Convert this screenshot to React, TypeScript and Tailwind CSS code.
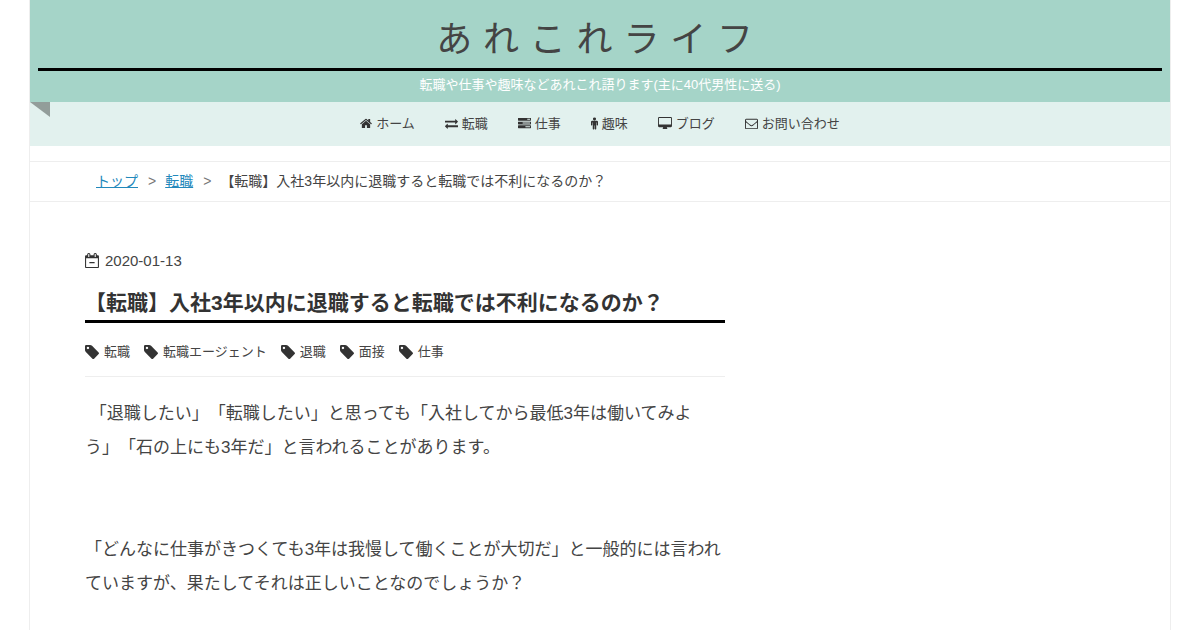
import clsx from 'clsx';

// [viewBox, path] of each glyph, on a 1792 unit em
const glyphs = {
  home: [
    '64 0 1664 1792',
    'M1472 992v480q0 26-19 45t-45 19h-384v-384h-256v384h-384q-26 0-45-19t-19-45v-480q0-1 .5-3t.5-3l575-474 575 474q1 2 1 6zm223-69l-62 74q-8 9-21 11h-3q-13 0-21-7l-692-577-692 577q-12 8-24 7-13-2-21-11l-62-74q-8-10-7-23.5t11-21.5l719-599q32-26 76-26t76 26l244 204v-195q0-14 9-23t23-9h192q14 0 23 9t9 23v408l219 182q10 8 11 21.5t-7 23.5z',
  ],
  exchange: [
    '0 0 1792 1792',
    'M1792 1184v192q0 13-9.5 22.5t-22.5 9.5h-1376v192q0 13-9.5 22.5t-22.5 9.5q-12 0-24-10l-319-320q-9-9-9-22 0-14 9-23l320-320q9-9 23-9 13 0 22.5 9.5t9.5 22.5v192h1376q13 0 22.5 9.5t9.5 22.5zm0-544q0 14-9 23l-320 320q-9 9-23 9-13 0-22.5-9.5t-9.5-22.5v-192h-1376q-13 0-22.5-9.5t-9.5-22.5v-192q0-13 9.5-22.5t22.5-9.5h1376v-192q0-14 9-23t23-9q12 0 24 10l319 319q9 9 9 23z',
  ],
  tasks: [
    '0 0 1792 1792',
    'M1024 1408h640v-128h-640v128zm-384-512h1024v-128h-1024v128zm640-512h384v-128h-384v128zm512 832v256q0 26-19 45t-45 19h-1664q-26 0-45-19t-19-45v-256q0-26 19-45t45-19h1664q26 0 45 19t19 45zm0-512v256q0 26-19 45t-45 19h-1664q-26 0-45-19t-19-45v-256q0-26 19-45t45-19h1664q26 0 45 19t19 45zm0-512v256q0 26-19 45t-45 19h-1664q-26 0-45-19t-19-45v-256q0-26 19-45t45-19h1664q26 0 45 19t19 45z',
  ],
  male: [
    '384 0 1024 1792',
    'M1408 672v416q0 40-28 68t-68 28-68-28-28-68v-352h-64v912q0 46-33 79t-79 33-79-33-33-79v-464h-64v464q0 46-33 79t-79 33-79-33-33-79v-912h-64v352q0 40-28 68t-68 28-68-28-28-68v-416q0-80 56-136t136-56h640q80 0 136 56t56 136zm-288-448q0 93-65.5 158.5t-158.5 65.5-158.5-65.5-65.5-158.5 65.5-158.5 158.5-65.5 158.5 65.5 65.5 158.5z',
  ],
  desktop: [
    '-64 0 1920 1792',
    'M1728 992v-832q0-13-9.5-22.5t-22.5-9.5h-1600q-13 0-22.5 9.5t-9.5 22.5v832q0 13 9.5 22.5t22.5 9.5h1600q13 0 22.5-9.5t9.5-22.5zm128-832v1088q0 66-47 113t-113 47h-544q0 37 16 77.5t32 71 16 43.5q0 26-19 45t-45 19h-512q-26 0-45-19t-19-45q0-14 16-44t32-70 16-78h-544q-66 0-113-47t-47-113v-1088q0-66 47-113t113-47h1600q66 0 113 47t47 113z',
  ],
  envelope: [
    '0 0 1792 1792',
    'M1664 1504v-768q-32 36-69 66-268 206-426 338-51 43-83 67t-86.5 48.5-102.5 24.5h-2q-48 0-102.5-24.5t-86.5-48.5-83-67q-158-132-426-338-37-30-69-66v768q0 13 9.5 22.5t22.5 9.5h1472q13 0 22.5-9.5t9.5-22.5zm0-1051v-24.5l-.5-13-3-12.5-5.5-9-9-7.5-14-2.5h-1472q-13 0-22.5 9.5t-9.5 22.5q0 168 147 284 193 152 401 317 6 5 35 29.5t46 37.5 44.5 31.5 50.5 27.5 43 9h2q20 0 43-9t50.5-27.5 44.5-31.5 46-37.5 35-29.5q208-165 401-317 54-43 100.5-115.5t46.5-131.5zm128-37v1088q0 66-47 113t-113 47h-1472q-66 0-113-47t-47-113v-1088q0-66 47-113t113-47h1472q66 0 113 47t47 113z',
  ],
  calendar: [
    '64 0 1664 1792',
    'M192 1664h1408v-1024h-1408v1024zm384-1216v-288q0-14-9-23t-23-9h-64q-14 0-23 9t-9 23v288q0 14 9 23t23 9h64q14 0 23-9t9-23zm768 0v-288q0-14-9-23t-23-9h-64q-14 0-23 9t-9 23v288q0 14 9 23t23 9h64q14 0 23-9t9-23zm384-64v1280q0 52-38 90t-90 38h-1408q-52 0-90-38t-38-90v-1280q0-52 38-90t90-38h128v-96q0-66 47-113t113-47h64q66 0 113 47t47 113v96h384v-96q0-66 47-113t113-47h64q66 0 113 47t47 113v96h128q52 0 90 38t38 90zM608 1088h576q32 0 32 32v64q0 32-32 32h-576q-32 0-32-32v-64q0-32 32-32z',
  ],
  tag: [
    '128 128 1516 1516',
    'M576 448q0-53-37.5-90.5t-90.5-37.5-90.5 37.5-37.5 90.5 37.5 90.5 90.5 37.5 90.5-37.5 37.5-90.5zm1067 576q0 53-37 90l-491 492q-39 37-91 37-53 0-90-37l-715-716q-38-37-64.5-101t-26.5-117v-416q0-52 38-90t90-38h416q53 0 117 26.5t102 64.5l715 714q37 39 37 91z',
  ],
};

type GlyphName = keyof typeof glyphs;

const navItems: { label: string; icon: GlyphName; width: string }[] = [
  { label: 'ホーム', icon: 'home', width: 'w-[12px]' },
  { label: '転職', icon: 'exchange', width: 'w-[13px]' },
  { label: '仕事', icon: 'tasks', width: 'w-[13px]' },
  { label: '趣味', icon: 'male', width: 'w-[7px]' },
  { label: 'ブログ', icon: 'desktop', width: 'w-[14px]' },
  { label: 'お問い合わせ', icon: 'envelope', width: 'w-[13px]' },
];

const tags = ['転職', '転職エージェント', '退職', '面接', '仕事'];

const title = '【転職】入社3年以内に退職すると転職では不利になるのか？';

function Glyph({ name, className }: { name: GlyphName; className: string }) {
  const [viewBox, d] = glyphs[name];
  return (
    <svg viewBox={viewBox} className={clsx('shrink-0 fill-current', className)} aria-hidden="true">
      <path d={d} />
    </svg>
  );
}

function Header() {
  return (
    <header className="bg-[#a5d4c8] px-2 pt-3 text-center">
      <h1 className="border-b-[3px] border-black text-4xl leading-[56px] tracking-[0.3em]">
        <a href="#">あれこれライフ</a>
      </h1>
      <p className="pt-1 pb-[7px] text-[13px] leading-5 text-white">
        転職や仕事や趣味などあれこれ語ります(主に40代男性に送る)
      </p>
    </header>
  );
}

function Nav() {
  return (
    <nav className="relative bg-[#e2f1ee]">
      {/* Folded ribbon corner */}
      <svg viewBox="0 0 20 15" className="absolute top-0 left-0 h-[15px] w-5" aria-hidden="true">
        <path d="M0 0h20v15z" fill="#929d9a" />
      </svg>
      <ul className="flex flex-wrap justify-center gap-x-[30px]">
        {navItems.map(({ label, icon, width }) => (
          <li key={label}>
            <a href="#" className="flex items-center gap-1 text-[13px] leading-[44px]">
              <Glyph name={icon} className={clsx('mb-px h-[13px] text-[#333]', width)} />
              {label}
            </a>
          </li>
        ))}
      </ul>
    </nav>
  );
}

function Breadcrumb() {
  return (
    <div className="mt-[15px] border-y border-[#eee] px-[66px]">
      <ol className="flex flex-wrap gap-x-[9px] text-sm leading-[39px]">
        {['トップ', '転職'].map((label) => (
          <li key={label} className="flex gap-x-[10px]">
            <a href="#" className="text-[#2288bb] underline">{label}</a>
            <span className="text-[#777]">&gt;</span>
          </li>
        ))}
        <li>{title}</li>
      </ol>
    </div>
  );
}

function Article() {
  return (
    <article className="max-w-[640px]">
      <div className="flex items-center gap-[6px] text-[15px] leading-6">
        <Glyph name="calendar" className="mb-px h-[15px] w-[14px] text-[#333]" />
        <time dateTime="2020-01-13">2020-01-13</time>
      </div>
      <h2 className="mt-3 border-b-[3px] border-black text-[21px] leading-[35px] font-bold text-[#333]">
        {title}
      </h2>
      <ul className="flex flex-wrap gap-x-[14px] border-b border-[#eee] pt-[17px] pb-3">
        {tags.map((tag) => (
          <li key={tag}>
            <a href="#" className="flex items-center gap-[5px] text-[13px] leading-6">
              <Glyph name="tag" className="size-[14px] text-[#333]" />
              {tag}
            </a>
          </li>
        ))}
      </ul>
      <div className="pt-5 text-[17px] leading-[34px]">
        <p>
          &nbsp;「退職したい」「転職したい」と思っても「入社してから最低3年は働いてみよう」「石の上にも3年だ」と言われることがあります。
        </p>
        <p className="mt-[68px]">
          「どんなに仕事がきつくても3年は我慢して働くことが大切だ」と一般的には言われていますが、果たしてそれは正しいことなのでしょうか？
        </p>
      </div>
    </article>
  );
}

export default function App() {
  return (
    <div
      className="h-screen overflow-hidden bg-white font-['Liberation_Sans','Noto_Sans_CJK_JP',sans-serif] text-[#444] [text-spacing-trim:space-all]"
      lang="ja"
    >
      <div className="mx-auto min-h-screen max-w-[1142px] border-x border-[#eee]">
        <Header />
        <Nav />
        <Breadcrumb />
        <main className="px-[55px] pt-[47px]">
          <Article />
        </main>
      </div>
    </div>
  );
}
